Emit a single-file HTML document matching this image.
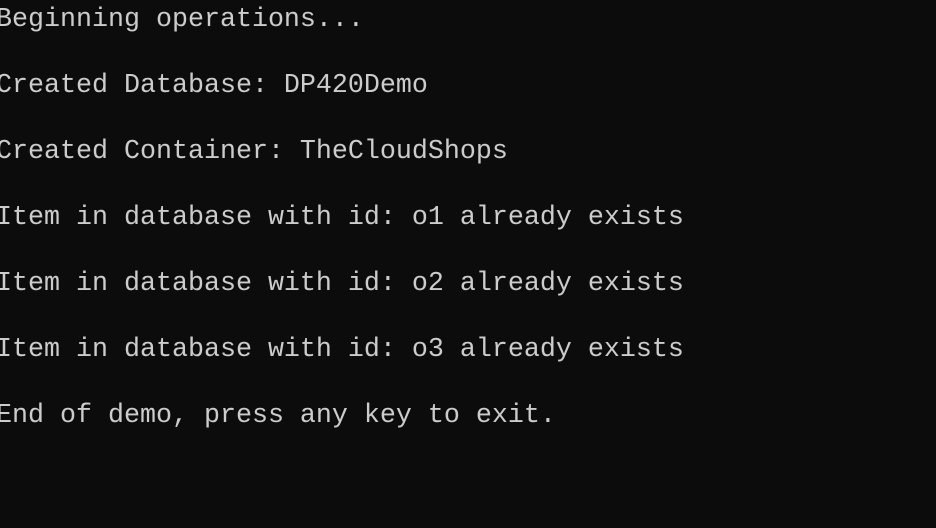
<!DOCTYPE html>
<html><head><meta charset="utf-8"><style>
html,body{margin:0;padding:0;background:#0c0c0c;width:936px;height:528px;overflow:hidden}
pre{margin:0;position:absolute;left:-4px;top:-13px;font-family:"Liberation Mono",monospace;font-size:26.67px;line-height:66px;color:#cccccc}
</style></head><body>
<pre>Beginning operations...
Created Database: DP420Demo
Created Container: TheCloudShops
Item in database with id: o1 already exists
Item in database with id: o2 already exists
Item in database with id: o3 already exists
End of demo, press any key to exit.</pre>
</body></html>
